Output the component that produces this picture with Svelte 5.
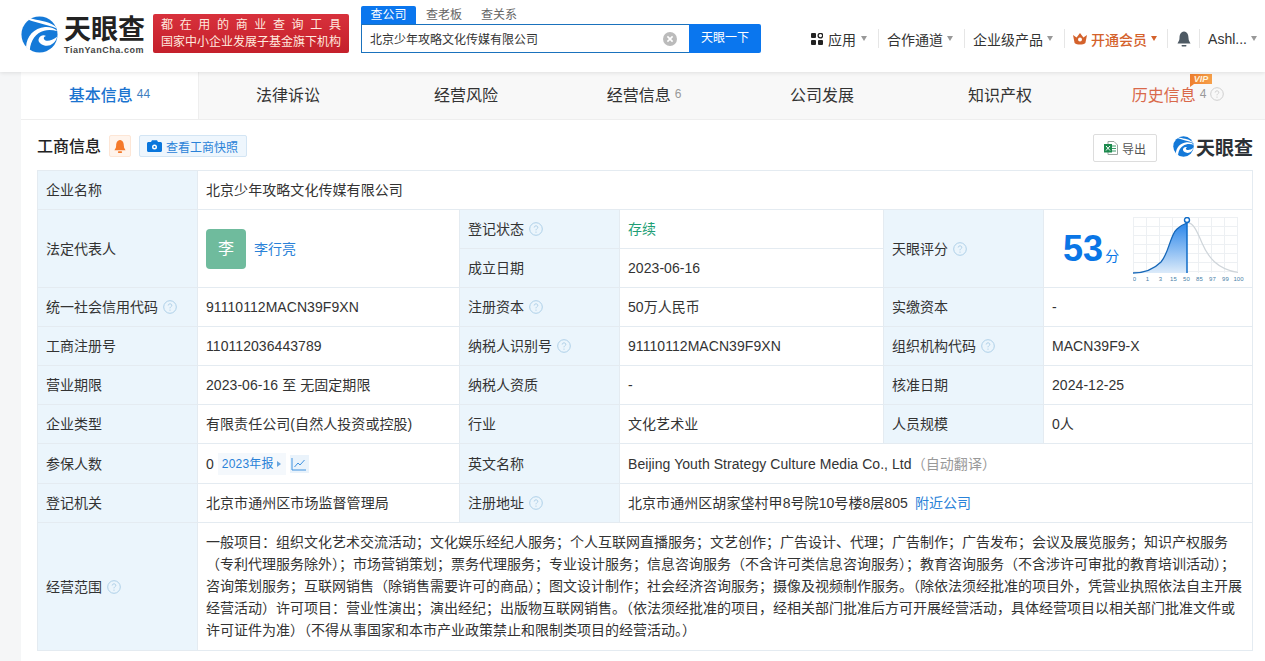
<script>
  const tabs = [
    { name: '基本信息', count: '44', active: true },
    { name: '法律诉讼' },
    { name: '经营风险' },
    { name: '经营信息', count: '6' },
    { name: '公司发展' },
    { name: '知识产权' },
    { name: '历史信息', count: '4', history: true }
  ];
  const ticks = ['0', '1', '3', '15', '50', '85', '97', '99', '100'];
  const gridX = [0, 13, 26, 39, 52, 65, 78, 91, 104];
  const gridY = [0, 9, 18, 27, 36, 45, 54];
  const curve = 'M0 56 C12 56 20 53 28 45 C36 36 37 18 44 12 C47 9 51 7 54 6';
  const scope = '一般项目：组织文化艺术交流活动；文化娱乐经纪人服务；个人互联网直播服务；文艺创作；广告设计、代理；广告制作；广告发布；会议及展览服务；知识产权服务（专利代理服务除外）；市场营销策划；票务代理服务；专业设计服务；信息咨询服务（不含许可类信息咨询服务）；教育咨询服务（不含涉许可审批的教育培训活动）；咨询策划服务；互联网销售（除销售需要许可的商品）；图文设计制作；社会经济咨询服务；摄像及视频制作服务。（除依法须经批准的项目外，凭营业执照依法自主开展经营活动）许可项目：营业性演出；演出经纪；出版物互联网销售。（依法须经批准的项目，经相关部门批准后方可开展经营活动，具体经营项目以相关部门批准文件或许可证件为准）（不得从事国家和本市产业政策禁止和限制类项目的经营活动。）';
</script>

{#snippet swirl(size)}
  <svg class="swirl" width={size} height={size} viewBox="0 0 40 40">
    <circle cx="20" cy="20" r="19.5" fill="#1479d8" />
    <path d="M10 2.500 C18 5 28 5 37 11 L38.500 13.500 C29 9 18 8 8 4 Z" fill="#fff" />
    <path d="M5.500 33.500 C6 22 14 13 26 12 C31 11.600 36 13 39.500 16.500 C34 15 29 14.800 25 16 C16 18.500 10.500 26 9.500 37 Z" fill="#fff" />
    <path d="M19 25 C20 21.500 24 20 27 21.500 C25 22 24 23.500 25 25 C27 28 33 27 39 22.500 C37.500 30 30 34 24.500 31.500 C21 30 18.500 28 19 25 Z" fill="#fff" />
  </svg>
{/snippet}

{#snippet help(color = '#aed0e8')}
  <svg class="help" width="14" height="14" viewBox="0 0 14 14">
    <circle cx="7" cy="7" r="6.300" fill="none" stroke={color} />
    <path d="M5.200 5.500 C5.200 3.300 8.800 3.300 8.800 5.400 C8.800 6.700 7 6.700 7 8.300" fill="none" stroke={color} />
    <circle cx="7" cy="10.100" r=".7" fill={color} />
  </svg>
{/snippet}

{#snippet caret(color = '#999')}
  <i class="caret" style="border-top-color: {color}"></i>
{/snippet}

<header>
  <div class="brand">
    {@render swirl(37)}
    <div class="brand-text">
      <b>天眼查</b>
      <span>TianYanCha.com</span>
    </div>
  </div>
  <div class="slogan">
    <div class="slogan-top"><span>都</span><span>在</span><span>用</span><span>的</span><span>商</span><span>业</span><span>查</span><span>询</span><span>工</span><span>具</span></div>
    <div>国家中小企业发展子基金旗下机构</div>
  </div>
  <div class="search">
    <div class="search-tabs">
      <span class="on">查公司</span>
      <span>查老板</span>
      <span>查关系</span>
    </div>
    <div class="search-box">
      <div class="search-input">
        <span>北京少年攻略文化传媒有限公司</span>
        <svg width="14" height="14" viewBox="0 0 14 14">
          <circle cx="7" cy="7" r="7" fill="#bbb" />
          <path d="M4.400 4.400 L9.600 9.600 M9.600 4.400 L4.400 9.600" stroke="#fff" stroke-width="1.600" />
        </svg>
      </div>
      <div class="search-btn">天眼一下</div>
    </div>
  </div>
  <nav>
    <div class="nav-item">
      <svg width="12" height="12" viewBox="0 0 12 12" fill="#222">
        <rect width="5" height="5" rx="1" /><circle cx="9.400" cy="2.600" r="2.300" fill="none" stroke="#222" stroke-width="1.300" />
        <rect y="7" width="5" height="5" rx="1" /><rect x="7" y="7" width="5" height="5" rx="1" />
      </svg>
      <span>应用</span>{@render caret()}
    </div>
    <div class="nav-item"><span>合作通道</span>{@render caret()}</div>
    <div class="nav-item"><span>企业级产品</span>{@render caret()}</div>
    <div class="nav-item vip">
      <svg width="14" height="12" viewBox="0 0 14 12">
        <path d="M0 2 L3.600 4.400 L7 0 L10.400 4.400 L14 2 L12.400 10 C10 12 4 12 1.600 10 Z" fill="#d4622c" />
        <circle cx="7" cy="6.400" r="2" fill="#fff" />
      </svg>
      <span>开通会员</span>{@render caret('#d4622c')}
    </div>
    <div class="nav-item bell">
      <svg width="14" height="16" viewBox="0 0 14 16" fill="#4e5a64">
        <path d="M7 .5 C10.500 1 11.500 4 11.500 7 C11.500 10 13 11 13.500 12.500 L.5 12.500 C1 11 2.500 10 2.500 7 C2.500 4 3.500 1 7 .5 Z" />
        <rect x="4.500" y="14" width="5" height="1.500" rx=".7" />
      </svg>
    </div>
    <div class="nav-item user"><span>Ashl...</span>{@render caret()}</div>
  </nav>
</header>

<main>
  <div class="tabs">
    {#each tabs as tab}
      <div class="tab" class:active={tab.active} class:history={tab.history}>
        <span class="tab-name">{tab.name}</span>
        {#if tab.count}<span class="tab-count">{tab.count}</span>{/if}
        {#if tab.history}
          {@render help('#cfcfcf')}
          <span class="vip-badge">VIP</span>
        {/if}
      </div>
    {/each}
  </div>

  <section>
    <div class="section-head">
      <div class="head-left">
        <h2>工商信息</h2>
        <span class="bell-box">
          <svg width="12" height="13" viewBox="0 0 14 15" fill="#f5792a">
            <path d="M7 0 C10.500 .5 11.500 3.500 11.500 6.500 C11.500 9.500 13 10.500 13.500 12 L.5 12 C1 10.500 2.500 9.500 2.500 6.500 C2.500 3.500 3.500 .5 7 0 Z" />
            <rect x="4.500" y="13" width="5" height="2" rx="1" />
          </svg>
        </span>
        <span class="snapshot">
          <svg width="15" height="12" viewBox="0 0 15 12">
            <path d="M1.500 2 H4 L5 .3 H10 L11 2 H13.500 C14.300 2 15 2.700 15 3.500 V10.500 C15 11.300 14.300 12 13.500 12 H1.500 C.7 12 0 11.300 0 10.500 V3.500 C0 2.700 .7 2 1.500 2 Z" fill="#0a76dc" />
            <circle cx="7.500" cy="7" r="2.500" fill="#fff" />
            <circle cx="7.500" cy="7" r="1.100" fill="#0a76dc" />
          </svg>
          查看工商快照
        </span>
      </div>
      <div class="head-right">
        <span class="export">
          <svg width="14" height="14" viewBox="0 0 14 14">
            <path d="M4 .5 H10 L13.500 4 V13.500 H4 Z" fill="#fff" stroke="#9aa5a0" />
            <path d="M8 5 H12 M8 7.500 H12 M8 10 H12" stroke="#3f9b6a" />
            <rect y="3" width="8" height="8.500" fill="#1d8a4e" />
            <path d="M2 5 L6 9.500 M6 5 L2 9.500" stroke="#fff" />
          </svg>
          导出
        </span>
        <div class="mini-brand">
          {@render swirl(21)}
          <b>天眼查</b>
        </div>
      </div>
    </div>

    <table>
      <colgroup>
        <col class="c-label" /><col class="c-val1" /><col class="c-label" /><col class="c-val2" /><col class="c-label" /><col />
      </colgroup>
      <tbody>
        <tr>
          <th>企业名称</th>
          <td colspan="5">北京少年攻略文化传媒有限公司</td>
        </tr>
        <tr>
          <th rowspan="2">法定代表人</th>
          <td rowspan="2">
            <div class="person"><span class="avatar">李</span><a>李行亮</a></div>
          </td>
          <th>登记状态 {@render help()}</th>
          <td class="green">存续</td>
          <th rowspan="2">天眼评分 {@render help()}</th>
          <td rowspan="2" class="score-cell">
            <div class="score">
              <div class="score-num"><b>53</b><span>分</span></div>
              <svg class="curve" width="112" height="66" viewBox="0 0 112 66">
                <defs>
                  <linearGradient id="fillArea" x1="0" y1="0" x2="0" y2="1">
                    <stop offset="0" stop-color="#2a86ea" />
                    <stop offset="1" stop-color="#dcebfa" />
                  </linearGradient>
                </defs>
                <g stroke="#edf0f3">
                  {#each gridX as x}<line x1={x + .5} y1="0" x2={x + .5} y2="56" />{/each}
                  {#each gridY as y}<line x1="0" y1={y + .5} x2="105" y2={y + .5} />{/each}
                </g>
                <path d="M54 6 C60 5 64 14 69 26 C75 40 84 52 105 55.500" fill="none" stroke="#cfd5da" stroke-width="1.200" />
                <path d="{curve} L54 56 Z" fill="url(#fillArea)" />
                <path d={curve} fill="none" stroke="#1667b8" stroke-width="1.300" />
                <line x1="54" y1="3" x2="54" y2="56" stroke="#0f6cc8" stroke-width="1.500" />
                <circle cx="54" cy="3" r="2.500" fill="#fff" stroke="#0f6cc8" stroke-width="1.400" />
                <g class="ticks">
                  {#each ticks as t, i}<text x={gridX[i] + 1.5} y="64">{t}</text>{/each}
                </g>
              </svg>
            </div>
          </td>
        </tr>
        <tr>
          <th>成立日期</th>
          <td>2023-06-16</td>
        </tr>
        <tr>
          <th>统一社会信用代码 {@render help()}</th>
          <td>91110112MACN39F9XN</td>
          <th>注册资本 {@render help()}</th>
          <td>50万人民币</td>
          <th>实缴资本</th>
          <td>-</td>
        </tr>
        <tr>
          <th>工商注册号</th>
          <td>110112036443789</td>
          <th>纳税人识别号 {@render help()}</th>
          <td>91110112MACN39F9XN</td>
          <th>组织机构代码 {@render help()}</th>
          <td>MACN39F9-X</td>
        </tr>
        <tr>
          <th>营业期限</th>
          <td>2023-06-16 至 无固定期限</td>
          <th>纳税人资质</th>
          <td>-</td>
          <th>核准日期</th>
          <td>2024-12-25</td>
        </tr>
        <tr>
          <th>企业类型</th>
          <td>有限责任公司(自然人投资或控股)</td>
          <th>行业</th>
          <td>文化艺术业</td>
          <th>人员规模</th>
          <td>0人</td>
        </tr>
        <tr class="tall">
          <th>参保人数</th>
          <td>
            <div class="insured">
              0
              <span class="report">2023年报<i></i></span>
              <span class="trend">
                <svg width="16" height="14" viewBox="0 0 16 14" fill="none" stroke="#3f92e0">
                  <path d="M1 1 V13 H15" />
                  <path d="M3.500 10 L7 6 L9 8 L13.500 3" />
                </svg>
              </span>
            </div>
          </td>
          <th>英文名称</th>
          <td colspan="3">Beijing Youth Strategy Culture Media Co., Ltd<span class="muted">（自动翻译）</span></td>
        </tr>
        <tr>
          <th>登记机关</th>
          <td>北京市通州区市场监督管理局</td>
          <th>注册地址 {@render help()}</th>
          <td colspan="3">北京市通州区胡家垡村甲8号院10号楼8层805<a class="near">附近公司</a></td>
        </tr>
        <tr class="scope">
          <th>经营范围 {@render help()}</th>
          <td colspan="5">{scope}</td>
        </tr>
      </tbody>
    </table>
  </section>
</main>

<style>
  :global(body) {
    margin: 0;
    background: #f5f6f7;
    color: #333;
    font-family: "Liberation Sans", "Noto Sans CJK SC", sans-serif;
  }

  header {
    position: relative;
    z-index: 1;
    display: flex;
    align-items: flex-start;
    height: 72px;
    box-sizing: border-box;
    padding: 6px 0 0 21px;
    background: #fff;
    box-shadow: 0 1px 4px rgba(0, 0, 0, .1);
  }

  .brand {
    display: flex;
    gap: 6px;
    margin-top: 10px;
    width: 132px;
  }

  .swirl {
    flex-shrink: 0;
  }

  .brand-text {
    display: flex;
    flex-direction: column;
    color: #222;
  }

  .brand-text b {
    font-size: 27px;
    line-height: 27px;
    margin-top: 1px;
  }

  .brand-text span {
    margin-top: 1px;
    font-size: 9px;
    line-height: 10px;
    font-weight: bold;
    letter-spacing: .55px;
    color: #444;
    white-space: nowrap;
  }

  .slogan {
    width: 196px;
    height: 39px;
    margin-top: 8px;
    box-sizing: border-box;
    padding: 3px 8px 0;
    border-radius: 2px;
    background: linear-gradient(180deg, #d8313c, #c4202b);
    color: #ffe9df;
    font-size: 12px;
    line-height: 17px;
    white-space: nowrap;
  }

  .slogan-top {
    display: flex;
    justify-content: space-between;
  }

  .search {
    width: 400px;
    margin-left: 12px;
  }

  .search-tabs {
    display: flex;
    gap: 10px;
    font-size: 12px;
    color: #666;
    line-height: 18px;
    white-space: nowrap;
  }

  .search-tabs span {
    width: 36px;
    margin-right: 9px;
    text-align: center;
  }

  .search-tabs span.on {
    width: 55px;
    margin-right: 0;
    background: #0a76ee;
    color: #fff;
    border-radius: 2px 2px 0 0;
  }

  .search-box {
    display: flex;
    height: 29px;
  }

  .search-input {
    display: flex;
    align-items: center;
    justify-content: space-between;
    width: 328px;
    box-sizing: border-box;
    padding: 0 12px 0 8px;
    border: 1px solid #1a72bd;
    border-right: 0;
    font-size: 12px;
    color: #333;
  }

  .search-btn {
    width: 72px;
    line-height: 29px;
    text-align: center;
    font-size: 12px;
    color: #fff;
    background: #0a76ee;
    border-radius: 0 2px 2px 0;
  }

  nav {
    position: absolute;
    right: 0;
    top: 29px;
    display: flex;
    align-items: center;
    font-size: 14px;
    color: #333;
  }

  .nav-item {
    display: flex;
    align-items: center;
    gap: 4px;
    height: 19px;
    padding: 0 8px;
    border-left: 1px solid #e6e6e6;
  }

  .nav-item:first-child {
    border-left: 0;
    padding-left: 0;
    gap: 5px;
  }

  .nav-item.vip {
    color: #d4622c;
    font-weight: 500;
  }

  .nav-item.bell {
    padding: 0 8px 0 9px;
  }

  .caret {
    width: 0;
    height: 0;
    margin-right: 3px;
    border-left: 3.500px solid transparent;
    border-right: 3.500px solid transparent;
    border-top: 5px solid #999;
  }

  .nav-item.vip .caret {
    margin-right: 2px;
  }

  .nav-item.user .caret {
    margin-right: 0;
  }

  main {
    margin-left: 21px;
    background: #fff;
    min-height: 589px;
  }

  .tabs {
    display: flex;
    height: 48px;
    overflow: hidden;
    background: #f8f8f8;
    border-bottom: 1px solid #eee;
    box-sizing: border-box;
  }

  .tab {
    position: relative;
    flex: 0 0 178px;
    box-sizing: border-box;
    display: flex;
    align-items: center;
    justify-content: center;
    gap: 4px;
    padding-bottom: 3px;
    font-size: 16px;
    color: #333;
  }

  .tab.active {
    background: #fff;
    color: #1a73cf;
    font-weight: 500;
    border-right: 1px solid #eee;
  }

  .tab.history {
    color: #d9694a;
  }

  .tab-count {
    font-size: 12px;
    font-weight: 400;
    color: #999;
  }

  .tab.active .tab-count {
    color: #3f7fbe;
  }

  .vip-badge {
    position: absolute;
    top: 2px;
    left: 101px;
    width: 22px;
    height: 10px;
    line-height: 10px;
    text-align: center;
    font-size: 9px;
    font-weight: bold;
    font-style: italic;
    color: #fff3dc;
    background: linear-gradient(90deg, #ef7f2f, #f6a04a);
  }

  .vip-badge::after {
    content: '';
    position: absolute;
    left: 0;
    top: 10px;
    border-top: 3px solid #ef7f2f;
    border-right: 4px solid transparent;
  }

  section {
    padding: 14px 12px 11px 16px;
  }

  .section-head {
    display: flex;
    align-items: center;
    height: 28px;
    margin-bottom: 8px;
  }

  .head-left {
    display: flex;
    align-items: center;
    margin-bottom: 4px;
  }

  h2 {
    margin: 2px 8px 0 0;
    font-size: 16px;
    line-height: 22px;
    font-weight: 500;
    color: #222;
  }

  .bell-box {
    display: flex;
    align-items: center;
    justify-content: center;
    width: 22px;
    height: 22px;
    box-sizing: border-box;
    margin-right: 8px;
    border: 1px solid #fde6d6;
    border-radius: 2px;
    background: #fff4ec;
  }

  .snapshot {
    display: flex;
    align-items: center;
    gap: 4px;
    height: 22px;
    box-sizing: border-box;
    padding: 0 8px 0 7px;
    border: 1px solid #d3e5f4;
    border-radius: 2px;
    background: #eef6fd;
    font-size: 12px;
    color: #2a82d8;
  }

  .head-right {
    display: flex;
    align-items: center;
    gap: 16px;
    margin-left: auto;
  }

  .export {
    display: flex;
    align-items: center;
    justify-content: center;
    gap: 4px;
    width: 64px;
    height: 28px;
    box-sizing: border-box;
    border: 1px solid #ddd;
    border-radius: 2px;
    font-size: 12px;
    color: #555;
  }

  .mini-brand {
    display: flex;
    align-items: center;
    gap: 2px;
    margin-bottom: 4px;
    font-size: 19px;
    color: #2b3136;
  }

  table {
    width: 1216px;
    table-layout: fixed;
    border-collapse: collapse;
    font-size: 14px;
    line-height: 22px;
  }

  .c-label {
    width: 160px;
  }

  .c-val1 {
    width: 262px;
  }

  .c-val2 {
    width: 264px;
  }

  tr {
    height: 39px;
  }

  tr.tall {
    height: 40px;
  }

  th,
  td {
    padding: 0 8px;
    border: 1px solid #e4ebf1;
    text-align: left;
    font-weight: 400;
    color: #333;
  }

  td {
    letter-spacing: .06px;
  }

  th {
    background: #ebf5fc;
    white-space: nowrap;
  }

  th .help {
    margin-left: 1px;
    vertical-align: -2px;
  }

  .green {
    color: #1f9f76;
  }

  .person {
    display: flex;
    align-items: center;
    gap: 8px;
  }

  .avatar {
    width: 40px;
    height: 40px;
    border-radius: 4px;
    background: #6fbb9d;
    color: #fff;
    font-size: 16px;
    line-height: 40px;
    text-align: center;
  }

  a {
    color: #2a82d8;
  }

  .near {
    margin-left: 7px;
  }

  .score-cell {
    padding: 0;
  }

  .score {
    display: flex;
    align-items: center;
    justify-content: space-between;
    padding: 0 7px 0 19px;
  }

  .score-num {
    display: flex;
    align-items: baseline;
    gap: 2px;
    color: #0a76e6;
  }

  .score-num b {
    font-size: 36px;
    line-height: 44px;
  }

  .score-num span {
    font-size: 14px;
  }

  .curve {
    margin-top: 3px;
  }

  .ticks text {
    font-size: 6px;
    fill: #4a7fa8;
    text-anchor: middle;
  }

  .insured {
    display: flex;
    align-items: center;
    gap: 4px;
  }

  .report {
    display: flex;
    align-items: center;
    gap: 3px;
    height: 22px;
    padding: 0 5px 0 4px;
    background: #f4f8fc;
    font-size: 12px;
    letter-spacing: .2px;
    color: #2a82d8;
  }

  .report i {
    width: 0;
    height: 0;
    border: 3px solid transparent;
    border-left: 4px solid #6aa6de;
    border-right: 0;
  }

  .trend {
    display: flex;
    align-items: center;
    justify-content: center;
    width: 19px;
    height: 18px;
    background: #eaf3fb;
  }

  .muted {
    color: #999;
  }

  .scope td {
    padding: 8px 8px 9px;
    letter-spacing: 0;
  }
</style>
